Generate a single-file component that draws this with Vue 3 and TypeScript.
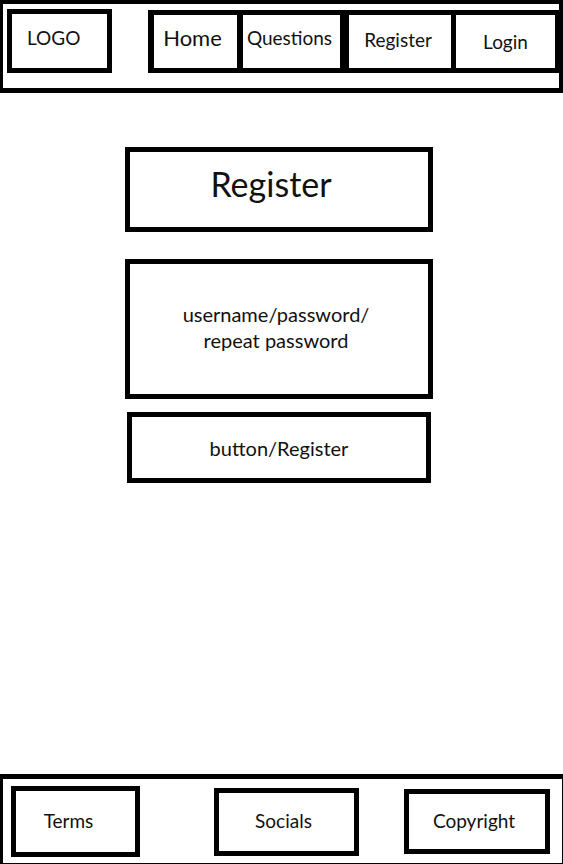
<script setup lang="ts">
interface NavLink {
  id: string
  label: string
}

const navLinks: NavLink[] = [
  { id: 'home', label: 'Home' },
  { id: 'questions', label: 'Questions' },
  { id: 'register', label: 'Register' },
  { id: 'login', label: 'Login' },
]

const footerLinks: NavLink[] = [
  { id: 'terms', label: 'Terms' },
  { id: 'socials', label: 'Socials' },
  { id: 'copyright', label: 'Copyright' },
]
</script>

<template>
  <div class="page">
    <header class="header">
      <a class="logo" href="#home">LOGO</a>
      <nav class="nav">
        <a
          v-for="link in navLinks"
          :key="link.id"
          :class="['nav-link', link.id]"
          :href="'#' + link.id"
        >{{ link.label }}</a>
      </nav>
    </header>

    <main class="main">
      <h1 class="title">Register</h1>
      <p class="fields">username/password/<br>repeat password</p>
      <button class="submit" type="button">button/Register</button>
    </main>

    <footer class="footer">
      <a
        v-for="link in footerLinks"
        :key="link.id"
        :class="['footer-link', link.id]"
        :href="'#' + link.id"
      >{{ link.label }}</a>
    </footer>
  </div>
</template>

<style>
body {
  margin: 0;
  background: #fff;
}
</style>

<style scoped>
.page {
  display: flex;
  flex-direction: column;
  min-height: 100vh;
  color: #111;
  font-family: Lato, "Liberation Sans", sans-serif;
  font-size: 19px;
  line-height: 26px;
}

.page * {
  box-sizing: border-box;
}

a {
  color: inherit;
  text-decoration: none;
}

.header {
  display: flex;
  justify-content: space-between;
  align-items: flex-start;
  padding: 5px 0 15px 4px;
  border: solid #000;
  border-width: 4px 4px 5px 3px;
}

.logo {
  flex: 0 1 105px;
  height: 64px;
  padding: 11px 15px;
  border: 5px solid #000;
}

.nav {
  display: flex;
  flex: 0 1 411px;
  height: 63px;
  margin-top: 1px;
  border: solid #000;
  border-width: 5px 4px 5px 6px;
}

.nav-link {
  display: flex;
  justify-content: center;
  padding-top: 10px;
}

.nav-link.home {
  flex: 0 1 89px;
  padding-right: 6px;
  border-right: 6px solid #000;
  font-size: 22px;
}

.nav-link.questions {
  flex: 0 1 106px;
  padding-right: 4px;
  border-right: 9px solid #000;
}

.nav-link.register {
  flex: 0 1 107px;
  padding-top: 12px;
  padding-right: 4px;
  border-right: 5px solid #000;
}

.nav-link.login {
  flex: 0 1 99px;
  padding-top: 14px;
}

.main {
  display: flex;
  flex-direction: column;
  align-items: center;
  padding: 54px 130px 40px 125px;
  font-size: 20px;
}

.title,
.fields,
.submit {
  display: flex;
  justify-content: center;
  width: 100%;
  margin: 0;
  border: 5px solid #000;
  text-align: center;
}

.title {
  height: 85px;
  padding: 11px 16px 0 0;
  font-size: 34px;
  font-weight: 400;
  line-height: 42px;
}

.fields {
  height: 140px;
  margin-top: 27px;
  padding: 37px 6px 0 0;
}

.submit {
  align-items: center;
  width: calc(100% - 4px);
  height: 71px;
  margin-top: 13px;
  padding: 0;
  background: #fff;
  color: inherit;
  font: inherit;
}

.footer {
  display: flex;
  justify-content: space-between;
  align-items: center;
  margin-top: auto;
  padding: 7px 12px 6px 8px;
  border: solid #000;
  border-width: 5px 1px 1px 3px;
}

.footer-link {
  display: flex;
  justify-content: center;
  align-items: center;
  padding: 0 6px 2px 0;
  border: 5px solid #000;
}

.footer-link.terms {
  flex: 0 1 129px;
  height: 71px;
  padding-right: 14px;
}

.footer-link.socials {
  flex: 0 1 145px;
  height: 68px;
  margin-left: 29px;
}

.footer-link.copyright {
  flex: 0 1 146px;
  height: 65px;
}
</style>
